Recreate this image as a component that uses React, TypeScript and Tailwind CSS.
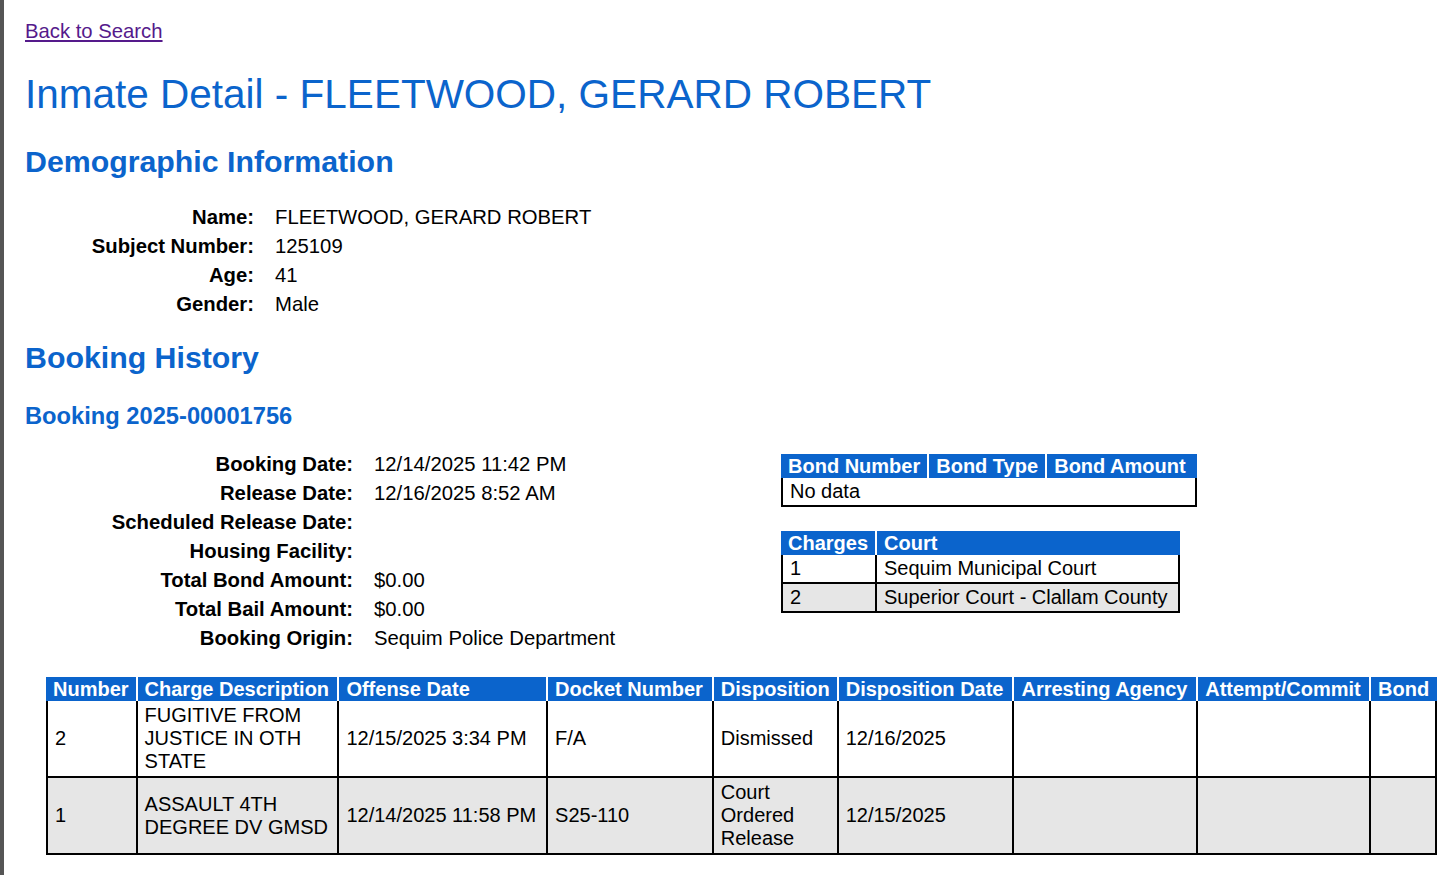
const BLUE = "bg-[#0b64cc]";

const demographics: [string, string][] = [
  ["Name:", "FLEETWOOD, GERARD ROBERT"],
  ["Subject Number:", "125109"],
  ["Age:", "41"],
  ["Gender:", "Male"],
];

const booking: [string, string][] = [
  ["Booking Date:", "12/14/2025 11:42 PM"],
  ["Release Date:", "12/16/2025 8:52 AM"],
  ["Scheduled Release Date:", ""],
  ["Housing Facility:", ""],
  ["Total Bond Amount:", "$0.00"],
  ["Total Bail Amount:", "$0.00"],
  ["Booking Origin:", "Sequim Police Department"],
];

const chargeCols = [
  { label: "Number", w: "w-[91px]" },
  { label: "Charge Description", w: "w-[202px]" },
  { label: "Offense Date", w: "w-[209px]" },
  { label: "Docket Number", w: "w-[166px]" },
  { label: "Disposition", w: "w-[124px]" },
  { label: "Disposition Date", w: "w-[176px]" },
  { label: "Arresting Agency", w: "w-[184px]" },
  { label: "Attempt/Commit", w: "w-[173px]" },
  { label: "Bond", w: "w-[66px]" },
];

// columns that should never wrap in the charges grid
const noWrapCols = [0, 2, 3, 5];

const charges = [
  ["2", "FUGITIVE FROM JUSTICE IN OTH STATE", "12/15/2025 3:34 PM", "F/A", "Dismissed", "12/16/2025", "", "", ""],
  ["1", "ASSAULT 4TH DEGREE DV GMSD", "12/14/2025 11:58 PM", "S25-110", "Court Ordered Release", "12/15/2025", "", "", ""],
];

function Th({ children, last, className = "" }: { children: React.ReactNode; last?: boolean; className?: string }) {
  return (
    <th
      className={`${BLUE} ${last ? "" : "border-r-2 border-white"} px-[7px] py-0 text-left align-middle text-[20px] font-bold leading-[24px] whitespace-nowrap text-white ${className}`}
    >
      {children}
    </th>
  );
}

function Td({
  children,
  first,
  tall,
  nowrap,
}: {
  children?: React.ReactNode;
  first?: boolean;
  tall?: boolean;
  nowrap?: boolean;
}) {
  return (
    <td
      className={`${first ? "border-l-2" : ""} ${nowrap ? "whitespace-nowrap" : ""} border-r-2 border-b-2 border-black px-[7px] ${tall ? "py-[3px]" : "py-[2px]"} text-left align-middle text-[20px] leading-[23px]`}
    >
      {children}
    </td>
  );
}

export default function App() {
  return (
    <div className="min-h-screen border-l-[4px] border-[#555] bg-white pl-[21px] pt-[20px] font-['Liberation_Sans',Arial,sans-serif] text-black">
      <a href="#" className="text-[20.3px] leading-[23px] text-[#551a8b] underline">
        Back to Search
      </a>

      <h1 className="mt-[26px] text-[40.5px] leading-[46px] font-normal text-[#0b64cc]">
        Inmate Detail - FLEETWOOD, GERARD ROBERT
      </h1>

      <h2 className="mt-[28px] text-[30.3px] leading-[34px] font-bold text-[#0b64cc]">Demographic Information</h2>

      <div className="mt-[24px] grid grid-cols-[229px_1fr] gap-x-[21px] text-[20.3px] leading-[29px]">
        {demographics.map(([k, v]) => (
          <div key={k} className="contents">
            <div className="text-right font-bold">{k}</div>
            <div>{v}</div>
          </div>
        ))}
      </div>

      <h2 className="mt-[22px] text-[30.3px] leading-[34px] font-bold text-[#0b64cc]">Booking History</h2>
      <h3 className="mt-[28px] text-[23.7px] leading-[27px] font-bold text-[#0b64cc]">Booking 2025-00001756</h3>

      <div className="mt-[20px] flex">
        <div className="w-[756px] shrink-0">
          <div className="grid grid-cols-[328px_1fr] gap-x-[21px] text-[20.3px] leading-[29px]">
            {booking.map(([k, v]) => (
              <div key={k} className="contents">
                <div className="text-right font-bold">{k}</div>
                <div>{v}</div>
              </div>
            ))}
          </div>
        </div>

        <div className="flex flex-col items-start gap-[24px] pt-[4px]">
          {/* Bonds */}
          <table className="w-[416px] border-separate border-spacing-0">
            <thead>
              <tr>
                <Th className="w-[148px]">Bond Number</Th>
                <Th className="w-[118px]">Bond Type</Th>
                <Th className="w-[150px]" last>
                  Bond Amount
                </Th>
              </tr>
            </thead>
            <tbody>
              <tr>
                <td
                  colSpan={3}
                  className="border-x-2 border-b-2 border-black px-[7px] py-[2px] text-[20px] leading-[23px]"
                >
                  No data
                </td>
              </tr>
            </tbody>
          </table>

          {/* Courts */}
          <table className="w-[399px] border-separate border-spacing-0">
            <thead>
              <tr>
                <Th className="w-[96px]">Charges</Th>
                <Th className="w-[303px]" last>
                  Court
                </Th>
              </tr>
            </thead>
            <tbody>
              {[
                ["1", "Sequim Municipal Court"],
                ["2", "Superior Court - Clallam County"],
              ].map(([n, c], i) => (
                <tr key={n} className={i % 2 ? "bg-[#e6e6e6]" : "bg-white"}>
                  <Td first nowrap>
                    {n}
                  </Td>
                  <Td nowrap>{c}</Td>
                </tr>
              ))}
            </tbody>
          </table>
        </div>
      </div>

      <table className="mt-[24px] ml-[21px] w-[1391px] border-separate border-spacing-0">
        <thead>
          <tr>
            {chargeCols.map((c, i) => (
              <Th key={c.label} className={c.w} last={i === chargeCols.length - 1}>
                {c.label}
              </Th>
            ))}
          </tr>
        </thead>
        <tbody>
          {charges.map((row, r) => (
            <tr key={r} className={r % 2 ? "bg-[#e6e6e6]" : "bg-white"}>
              {row.map((cell, i) => (
                <Td key={i} first={i === 0} tall nowrap={noWrapCols.includes(i)}>
                  {cell}
                </Td>
              ))}
            </tr>
          ))}
        </tbody>
      </table>
    </div>
  );
}
